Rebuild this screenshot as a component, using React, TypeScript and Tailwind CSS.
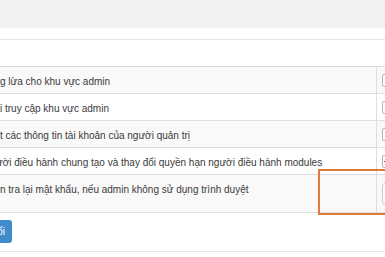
import React from "react";

// Rows of the admin security settings table (left side is scrolled out of view).
const rows = [
    {label: "g lừa cho khu vực admin", shift: "ml-0", kind: "check", checked: false},
    {label: "i truy cập khu vực admin", shift: "ml-0", kind: "check", checked: false},
    {label: "t các thông tin tài khoản của người quản trị", shift: "ml-0", kind: "check", checked: false},
    {label: "ười điều hành chung tạo và thay đổi quyền hạn người điều hành modules", shift: "-ml-[4px]", kind: "check", checked: true},
    {label: "n tra lại mật khẩu, nếu admin không sử dụng trình duyệt", shift: "ml-0", kind: "input", checked: false},
];

const Checkbox = ({checked}: {checked: boolean}) => (
    <span className="relative block w-[13px] h-[13px] shrink-0 rounded-[2px] border border-[#b5b5b5] bg-white">
        {checked && <span className="absolute left-[1px] top-[5px] w-[3px] h-[1px] bg-[#555]"/>}
    </span>
);

export default function App() {
    return (
        <div className="relative w-[385px] h-[257px] overflow-hidden bg-white text-[10px] text-[#3a3a3a] font-['Liberation_Sans',Arial,sans-serif]">
            {/* panel heading */}
            <div className="h-[28px] bg-[#f2f2f2]"/>
            <div className="h-[11px]"/>
            {/* empty table header */}
            <div className="h-[27px] border-t border-[#e6e6e6]"/>

            <div className="border-t border-[#dcdcdc]">
                {rows.map((row, i) => (
                    <div
                        key={i}
                        className={`flex border-b border-[#dedede] ${row.kind === "input" ? "h-[38px]" : "h-[27px]"} ${i % 2 === 0 ? "bg-[#f9f9f9]" : "bg-white"}`}
                    >
                        <div className="flex-1 flex items-start pt-[7px] overflow-hidden whitespace-nowrap">
                            <span className={row.shift}>{row.label}</span>
                        </div>
                        <div className="w-[9px] shrink-0 flex items-center pl-[5px] border-l border-[#dedede]">
                            {row.kind === "check" ? (
                                <Checkbox checked={row.checked}/>
                            ) : (
                                <span className="block w-[60px] h-[22px] shrink-0 rounded-[3px] border border-[#cccccc] bg-white"/>
                            )}
                        </div>
                    </div>
                ))}
            </div>

            {/* submit button, mostly scrolled off to the left */}
            <div className="mt-[7px] w-[12px] flex justify-end overflow-hidden">
                <button className="shrink-0 h-[23px] pl-[6px] pr-[7px] rounded-[3px] bg-[#428bca] text-white text-[10px] whitespace-nowrap">
                    Lưu thay đổi
                </button>
            </div>
            <div className="mt-[8px] border-t border-[#e6e6e6]"/>

            {/* highlight annotation */}
            <div className="absolute left-[318px] top-[169px] w-[90px] h-[46px] border-2 border-[#e07a3c]"/>
        </div>
    );
}
